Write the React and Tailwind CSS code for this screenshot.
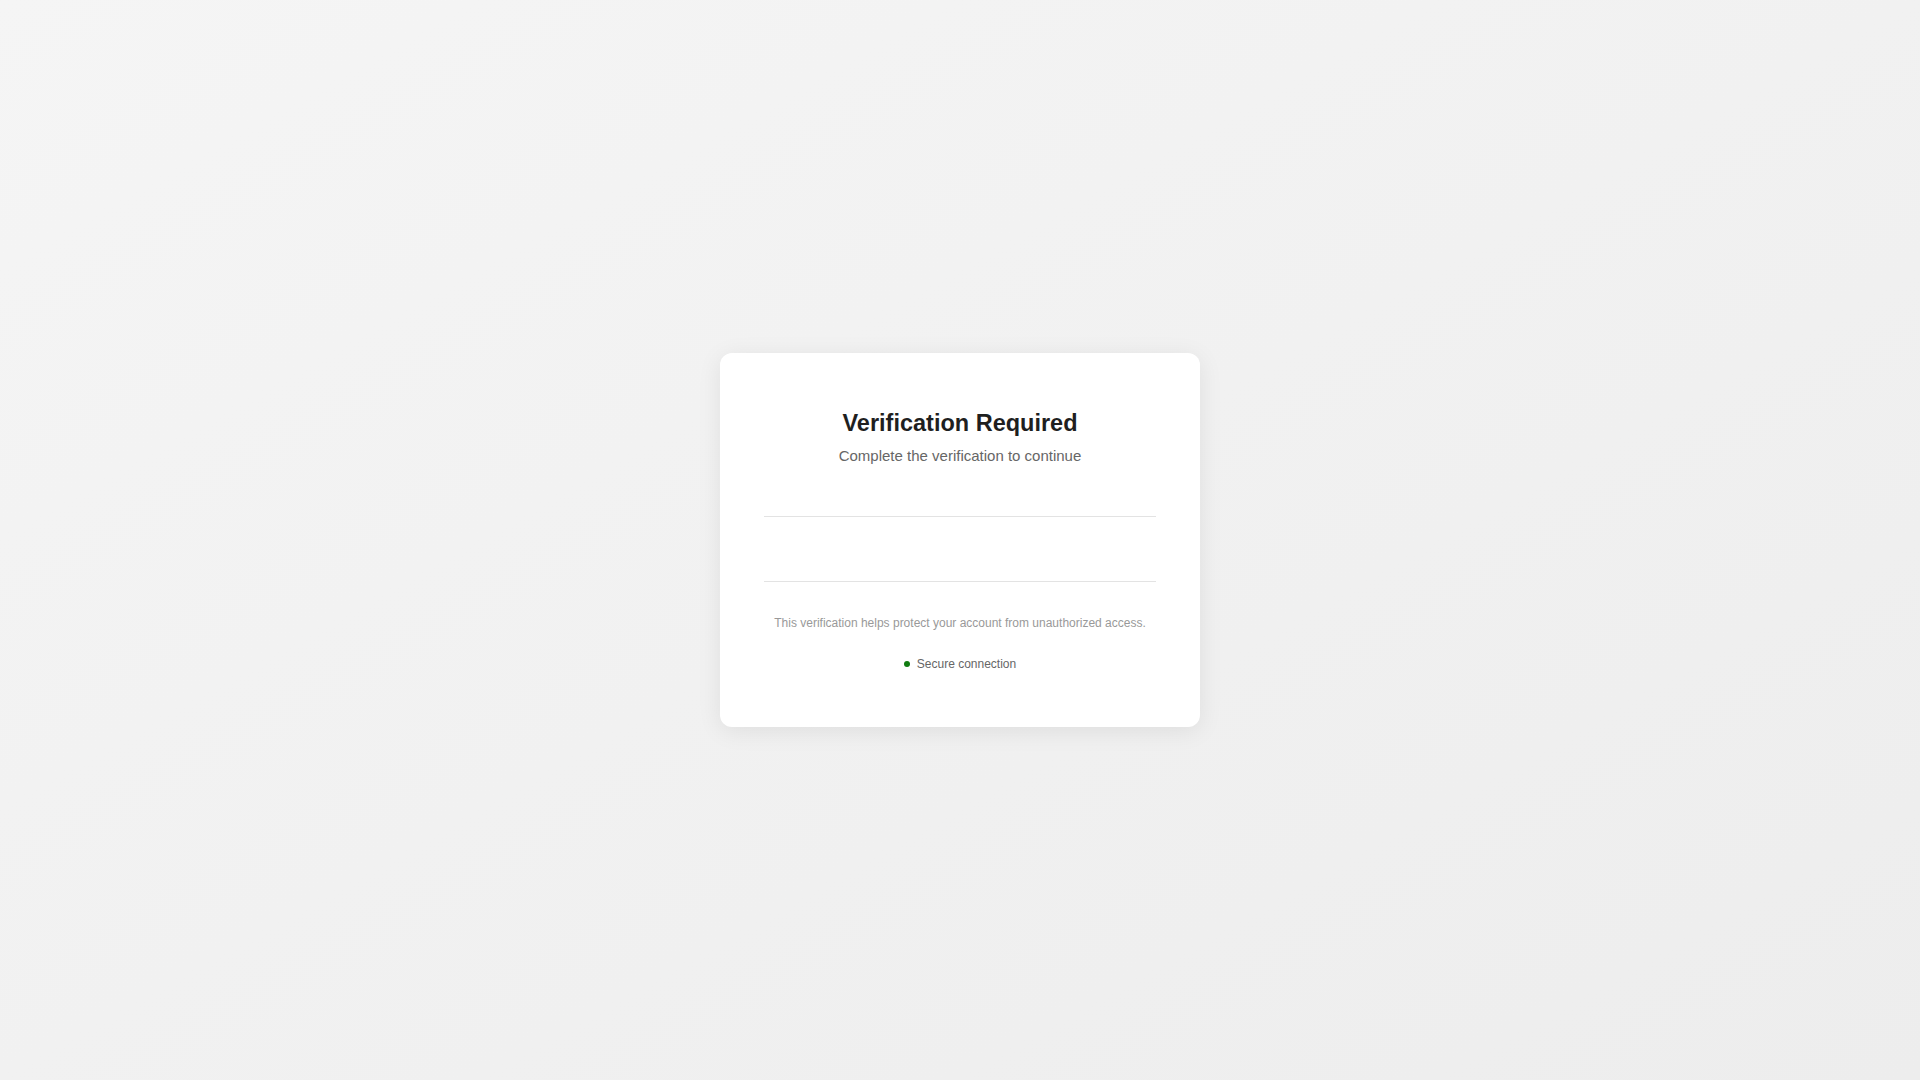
export default function App() {
  return (
    <div
      className="min-h-screen w-full flex items-center justify-center bg-gradient-to-br from-[#f5f5f5] to-[#ededed]"
      style={{ fontFamily: '"Liberation Sans", Arial, sans-serif' }}
    >
      <div className="w-[480px] bg-white rounded-xl shadow-[0_4px_24px_rgba(0,0,0,0.08)] px-[44px] pt-[56px] pb-[54px] text-center">
        <h1 className="text-[23.5px] leading-[29px] font-bold text-[#1f1f1f]">Verification Required</h1>
        <p className="mt-[7px] text-[15px] leading-[22px] text-[#666666]">Complete the verification to continue</p>

        {/* widget slot */}
        <div className="mt-[49px] h-[66px] border-y border-[#e3e3e3]"></div>

        <p className="mt-[32px] text-[12px] leading-[18px] text-[#999999]">
          This verification helps protect your account from unauthorized access.
        </p>

        <div className="mt-[23px] flex items-center justify-center gap-[7px] text-[12px] leading-[18px] text-[#666666]">
          <span className="w-[6px] h-[6px] rounded-full bg-[#107c10]"></span>
          <span>Secure connection</span>
        </div>
      </div>
    </div>
  );
}
